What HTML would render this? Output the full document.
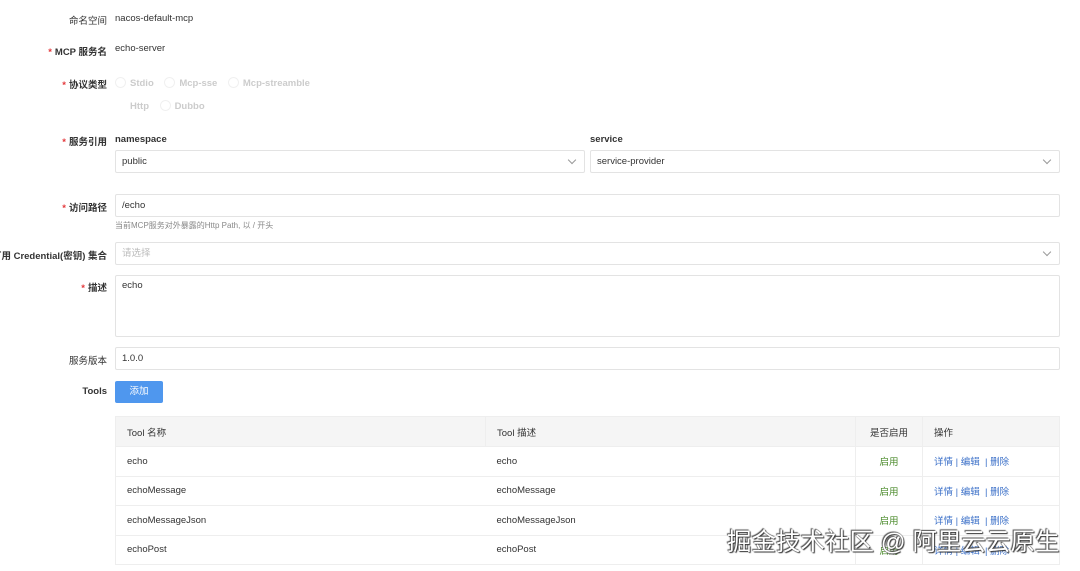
<!DOCTYPE html><html><head><meta charset="utf-8"><style>
body{margin:0;width:1080px;height:571px;background:#fff;position:relative;overflow:hidden;font-family:"Liberation Sans","Noto Sans CJK SC",sans-serif;font-size:9.5px;color:#333}
.a{position:absolute;white-space:nowrap}
.l{position:absolute;right:973px;text-align:right;white-space:nowrap;color:#333}
.s{color:#e4393c;margin-right:3px}
.b{position:absolute;border:1px solid #e3e3e3;border-radius:2px;box-sizing:border-box;background:#fff;padding-left:6px}
.chev{position:absolute;right:9px;top:6px;width:5px;height:5px;border-right:1px solid #999;border-bottom:1px solid #999;transform:rotate(45deg)}
.r{color:#ccc}
.dot{display:inline-block;width:9px;height:9px;border-radius:50%;border:1px solid #f0f0f0;vertical-align:-2px;margin-right:4px}
table{position:absolute;left:115px;top:416px;width:945px;border-collapse:collapse;font-size:9.5px;border:1px solid #eee}
td,th{border-bottom:1px solid #eee;height:29.5px;padding:0 11px;text-align:left;font-weight:normal;box-sizing:border-box}
th{background:#f5f5f5;height:30px}
.c3{border-left:1px solid #eee;text-align:center}
.c4{border-left:1px solid #eee}
.g{color:#4a8a2a}.k{color:#3a6fc8}
</style></head><body>
<div class="l" style="top:13px">命名空间</div><div class="a" style="left:115px;top:13px">nacos-default-mcp</div>
<div class="l" style="top:44px;font-weight:bold"><span class="s">*</span>MCP 服务名</div><div class="a" style="left:115px;top:43px">echo-server</div>
<div class="l" style="top:77px;font-weight:bold"><span class="s">*</span>协议类型</div>
<div class="a r" style="left:115px;top:77px;font-weight:bold"><span class="dot"></span>Stdio &nbsp; &nbsp;<span class="dot"></span>Mcp-sse &nbsp; &nbsp;<span class="dot"></span>Mcp-streamble</div>
<div class="a r" style="left:115px;top:100px;font-weight:bold"><span class="dot" style="border-color:#fff"></span>Http &nbsp; &nbsp;<span class="dot"></span>Dubbo</div>
<div class="l" style="top:134px;font-weight:bold"><span class="s">*</span>服务引用</div>
<div class="a" style="left:115px;top:134px;font-weight:bold">namespace</div>
<div class="a" style="left:590px;top:134px;font-weight:bold">service</div>
<div class="b" style="left:115px;top:150px;width:470px;height:23px;line-height:21px">public<i class="chev"></i></div>
<div class="b" style="left:590px;top:150px;width:470px;height:23px;line-height:21px">service-provider<i class="chev"></i></div>
<div class="l" style="top:200px;font-weight:bold"><span class="s">*</span>访问路径</div>
<div class="b" style="left:115px;top:194px;width:945px;height:23px;line-height:21px">/echo</div>
<div class="a" style="left:115px;top:220px;font-size:8px;color:#888">当前MCP服务对外暴露的Http Path, 以 / 开头</div>
<div class="l" style="top:248px;font-weight:bold">可用 Credential(密钥) 集合</div>
<div class="b" style="left:115px;top:242px;width:945px;height:23px;line-height:21px;color:#bbb">请选择<i class="chev"></i></div>
<div class="l" style="top:280px;font-weight:bold"><span class="s">*</span>描述</div>
<div class="b" style="left:115px;top:275px;width:945px;height:62px;padding-top:4px">echo</div>
<div class="l" style="top:353px">服务版本</div>
<div class="b" style="left:115px;top:347px;width:945px;height:23px;line-height:21px">1.0.0</div>
<div class="l" style="top:386px;font-weight:bold">Tools</div>
<div class="a" style="left:115px;top:381px;width:48px;height:22px;background:#4f97ee;border-radius:2px;color:#fff;text-align:center;line-height:22px">添加</div>
<table>
<tr><th style="width:370px">Tool 名称</th><th style="width:370px;border-left:1px solid #eee">Tool 描述</th><th class="c3" style="width:67px">是否启用</th><th class="c4">操作</th></tr>
<tr><td>echo</td><td>echo</td><td class="c3 g">启用</td><td class="c4 k">详情 | 编辑 &nbsp;| 删除</td></tr>
<tr><td>echoMessage</td><td>echoMessage</td><td class="c3 g">启用</td><td class="c4 k">详情 | 编辑 &nbsp;| 删除</td></tr>
<tr><td>echoMessageJson</td><td>echoMessageJson</td><td class="c3 g">启用</td><td class="c4 k">详情 | 编辑 &nbsp;| 删除</td></tr>
<tr><td>echoPost</td><td>echoPost</td><td class="c3 g">启用</td><td class="c4 k">详情 | 编辑 &nbsp;| 删除</td></tr>
</table>
<div class="a" style="left:727px;top:523px;font-size:24.5px;color:#fff;text-shadow:0 0 1px #333,1px 1px 1px #333,-1px -1px 1px #555">掘金技术社区 @ 阿里云云原生</div>
</body></html>
